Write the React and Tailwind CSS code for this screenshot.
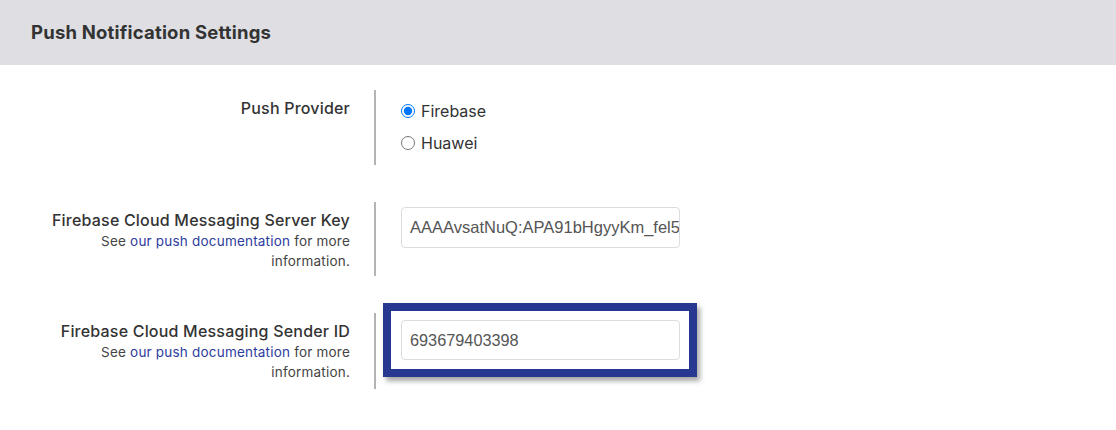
import React from "react";

const labelFont = { fontFamily: "Inter, 'Noto Sans', sans-serif" };

function Label({ title, sub }) {
  return (
    <div className="w-[350px] shrink-0 text-right pt-[8px] text-[#333]" style={labelFont}>
      <div className="text-[16px] leading-[21px] font-medium tracking-[0.2px]">{title}</div>
      {sub && (
        <div className="text-[13.5px] leading-[20px] text-[#444] tracking-[0.2px]">
          See <a className="text-[#2d3c9e]">our push documentation</a> for more
          <br />
          information.
        </div>
      )}
    </div>
  );
}

export default function App() {
  return (
    <div className="w-[1116px] h-[430px] bg-white" style={labelFont}>
      <div className="h-[65px] bg-[#dfdfe3] flex items-center pl-[31px]">
        <h1 className="text-[18.5px] font-bold text-[#333] tracking-[0.2px]">Push Notification Settings</h1>
      </div>

      <div className="flex flex-col gap-[37px] pt-[25px]">
        <div className="flex items-start">
          <Label title="Push Provider" />
          <div className="ml-[24px] border-l-2 border-[#b3b3b3] pl-[25px] pt-[5px] pb-[6px]">
            <label className="h-[32px] flex items-center gap-[6px] text-[16px] text-[#333]">
              <input type="radio" name="p" defaultChecked className="m-0 w-[14px] h-[14px]" />
              Firebase
            </label>
            <label className="h-[32px] flex items-center gap-[6px] text-[16px] text-[#333]">
              <input type="radio" name="p" className="m-0 w-[14px] h-[14px]" />
              Huawei
            </label>
          </div>
        </div>

        <div className="flex items-start">
          <Label title="Firebase Cloud Messaging Server Key" sub />
          <div className="ml-[24px] border-l-2 border-[#b3b3b3] pl-[25px] pt-[5px] pb-[28px]">
            <input
              readOnly
              value="AAAAvsatNuQ:APA91bHgyyKm_fel5xQ9kLmZp2hT"
              className="w-[279px] h-[41px] border border-[#dcdcdc] rounded-[4px] pl-[8px] pr-0 text-[16.5px] text-[#555] outline-none"
              style={{ fontFamily: "'Liberation Sans', Arial, sans-serif" }}
            />
          </div>
        </div>

        <div className="flex items-start">
          <Label title="Firebase Cloud Messaging Sender ID" sub />
          <div className="ml-[24px] border-l-2 border-[#b3b3b3] pl-[25px] pt-[7px] pb-[29px]">
            <div className="relative">
              <div className="absolute -left-[18px] -top-[17px] w-[314px] h-[74px] border-[8px] border-[#283891] shadow-[3px_4px_5px_rgba(0,0,0,0.35)]" />
              <input
                readOnly
                value="693679403398"
                className="relative w-[279px] h-[40px] border border-[#dcdcdc] rounded-[4px] pl-[8px] pr-0 text-[16.3px] text-[#555] outline-none bg-white"
                style={{ fontFamily: "'Liberation Sans', Arial, sans-serif" }}
              />
            </div>
          </div>
        </div>
      </div>
    </div>
  );
}
